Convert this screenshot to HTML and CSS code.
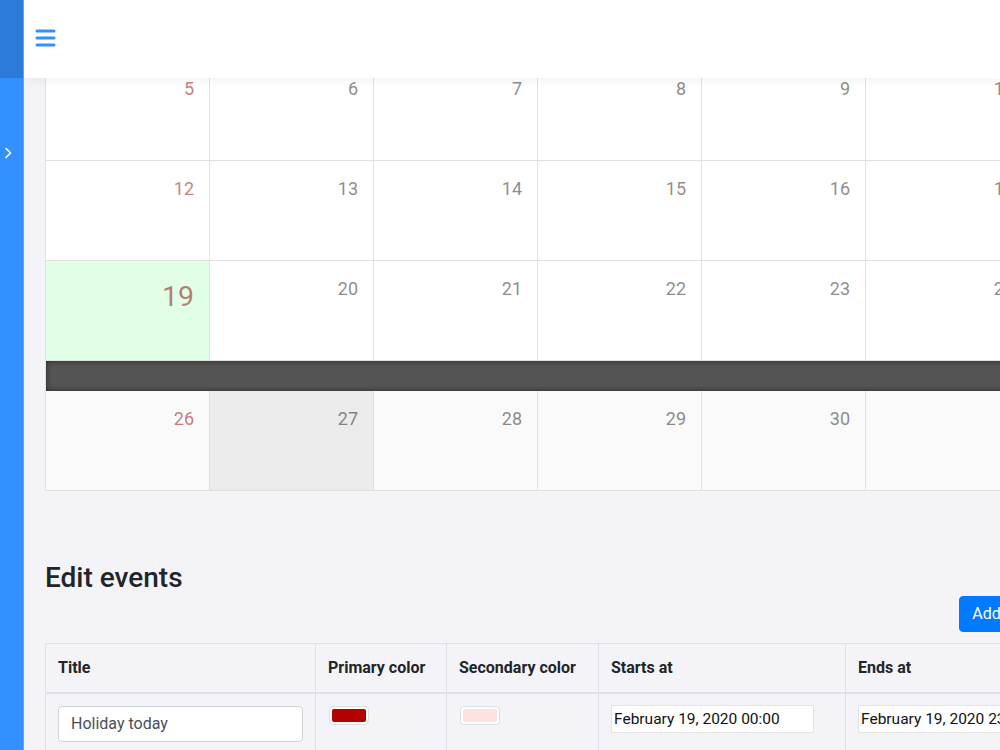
FILE: index.html
```html
<!DOCTYPE html>
<html lang="en">
<head>
<meta charset="utf-8">
<title>Calendar</title>
<link rel="stylesheet" href="styles.css">
</head>
<body>
<div class="app">
  <aside class="sidebar">
    <div class="sidebar-top"></div>
    <div class="sidebar-toggle">
      <svg width="8" height="12" viewBox="0 0 8 12"><path d="M2 1.5 L6.5 6 L2 10.5" fill="none" stroke="#fff" stroke-width="1.6" stroke-linecap="round" stroke-linejoin="round"/></svg>
    </div>
  </aside>
  <div class="main">
    <header class="topbar">
      <svg class="burger" width="21" height="18" viewBox="0 0 21 18"><g stroke="#3390ff" stroke-width="3" stroke-linecap="round"><line x1="2" y1="2" x2="19" y2="2"/><line x1="2" y1="9" x2="19" y2="9"/><line x1="2" y1="16" x2="19" y2="16"/></g></svg>
    </header>
    <div class="content">
      <div class="calendar">
        <div class="cal-row">
          <div class="cal-cell weekend"><span class="num">5</span></div>
          <div class="cal-cell"><span class="num">6</span></div>
          <div class="cal-cell"><span class="num">7</span></div>
          <div class="cal-cell"><span class="num">8</span></div>
          <div class="cal-cell"><span class="num">9</span></div>
          <div class="cal-cell"><span class="num">10</span></div>
          <div class="cal-cell weekend"><span class="num">11</span></div>
        </div>
        <div class="cal-row">
          <div class="cal-cell weekend"><span class="num">12</span></div>
          <div class="cal-cell"><span class="num">13</span></div>
          <div class="cal-cell"><span class="num">14</span></div>
          <div class="cal-cell"><span class="num">15</span></div>
          <div class="cal-cell"><span class="num">16</span></div>
          <div class="cal-cell"><span class="num">17</span></div>
          <div class="cal-cell weekend"><span class="num">18</span></div>
        </div>
        <div class="cal-row">
          <div class="cal-cell weekend today"><span class="num">19</span></div>
          <div class="cal-cell"><span class="num">20</span></div>
          <div class="cal-cell"><span class="num">21</span></div>
          <div class="cal-cell"><span class="num">22</span></div>
          <div class="cal-cell"><span class="num">23</span></div>
          <div class="cal-cell"><span class="num">24</span></div>
          <div class="cal-cell weekend"><span class="num">25</span></div>
        </div>
        <div class="open-day"></div>
        <div class="cal-row last">
          <div class="cal-cell weekend"><span class="num">26</span></div>
          <div class="cal-cell hovered"><span class="num">27</span></div>
          <div class="cal-cell"><span class="num">28</span></div>
          <div class="cal-cell"><span class="num">29</span></div>
          <div class="cal-cell"><span class="num">30</span></div>
          <div class="cal-cell"></div>
          <div class="cal-cell weekend"></div>
        </div>
      </div>

      <section class="edit">
        <h3 class="edit-title">Edit events</h3>
        <div class="toolbar">
          <button class="btn-primary">Add new</button>
        </div>
        <table class="events">
          <colgroup>
            <col class="c-title"><col class="c-primary"><col class="c-secondary"><col class="c-date"><col class="c-date"><col class="c-remove">
          </colgroup>
          <thead>
            <tr>
              <th>Title</th>
              <th>Primary color</th>
              <th>Secondary color</th>
              <th>Starts at</th>
              <th>Ends at</th>
              <th>Remove</th>
            </tr>
          </thead>
          <tbody>
            <tr>
              <td><input class="form-control" type="text" value="Holiday today"></td>
              <td><span class="swatch"><span class="swatch-fill primary"></span></span></td>
              <td><span class="swatch"><span class="swatch-fill secondary"></span></span></td>
              <td><input class="date-input" type="text" value="February 19, 2020 00:00"></td>
              <td><input class="date-input" type="text" value="February 19, 2020 23:59"></td>
              <td></td>
            </tr>
          </tbody>
        </table>
      </section>
    </div>
  </div>
</div>
</body>
</html>
```

FILE: styles.css
```css
* { box-sizing: border-box; }

html, body {
  margin: 0;
  height: 100%;
  overflow: hidden;
}

body {
  background: #f4f4f8;
  font-family: Roboto, "Liberation Sans", Arial, sans-serif;
  color: #212529;
}

.app {
  display: flex;
  height: 750px;
}

.sidebar {
  width: 24px;
  flex: none;
  background: #3390ff;
  border-right: 1px solid #5aa6ff;
  display: flex;
  flex-direction: column;
  position: relative;
  z-index: 3;
}

.sidebar-top {
  height: 78px;
  background: #2d7bd8;
}

.sidebar-toggle {
  margin-top: 68px;
  padding-left: 4px;
  height: 14px;
  display: flex;
  align-items: center;
}

.main {
  flex: 1;
  min-width: 0;
  display: flex;
  flex-direction: column;
  overflow: hidden;
}

.topbar {
  height: 78px;
  flex: none;
  background: #fff;
  display: flex;
  align-items: center;
  padding-left: 11px;
  position: relative;
  z-index: 2;
  box-shadow: 0 3px 10px rgba(0, 0, 0, 0.05);
}

.burger { display: block; margin-top: -2px; }

.content {
  padding-left: 21px;
}

.calendar {
  width: 1149px;
  margin-top: -18px;
  border-top: 1px solid #e1e1e1;
  border-left: 1px solid #e1e1e1;
  background: #fff;
}

.cal-row {
  display: grid;
  grid-template-columns: repeat(7, 164px);
  height: 100px;
  border-bottom: 1px solid #e1e1e1;
}

.cal-cell {
  border-right: 1px solid #e1e1e1;
  display: flex;
  justify-content: flex-end;
  align-items: flex-start;
}

.num {
  margin: 14px 15px 0 0;
  font-size: 18px;
  line-height: 27px;
  color: #000;
  opacity: 0.45;
}

.weekend .num {
  color: #8b0000;
  opacity: 0.5;
}

.today { background: #e1ffe6; }

.today .num {
  font-size: 28.5px;
  line-height: 42px;
  margin-top: 15px;
}

.last .cal-cell { background: #fafafa; }
.last .cal-cell.hovered { background: #ebebeb; }

.open-day {
  height: 30px;
  background: #555;
  box-shadow: inset 0 0 6px 0 rgba(0, 0, 0, 0.55);
}

.edit {
  width: 1002px;
  padding-top: 70px;
}

.edit-title {
  margin: 0;
  font-size: 28px;
  font-weight: 500;
  line-height: 1.2;
  color: #212529;
}

.toolbar {
  display: flex;
  justify-content: flex-end;
  margin-top: 1px;
}

.btn-primary {
  font-family: inherit;
  font-size: 16px;
  line-height: 24px;
  padding: 5px 12px;
  color: #fff;
  background: #007bff;
  border: 1px solid #007bff;
  border-radius: 4px;
}

.events {
  margin-top: 11px;
  border-collapse: collapse;
  table-layout: fixed;
  width: 1201px;
}

.c-title { width: 270px; }
.c-primary { width: 131px; }
.c-secondary { width: 152px; }
.c-date { width: 247px; }
.c-remove { width: 154px; }

.events th,
.events td {
  border: 1px solid #dee2e6;
  padding: 12px;
  text-align: left;
  vertical-align: top;
  font-size: 16px;
  line-height: 24px;
}

.events th {
  font-weight: 700;
  border-bottom-width: 2px;
  color: #212529;
}

.form-control {
  display: block;
  width: 100%;
  height: 36px;
  padding: 5px 12px;
  font-family: inherit;
  font-size: 16px;
  color: #495057;
  background: #fff;
  border: 1px solid #ced4da;
  border-radius: 4px;
}

.swatch {
  display: block;
  width: 40px;
  height: 19px;
  margin: 0 0 0 1px;
  padding: 2px;
  background: #fff;
  border: 1px solid #dedede;
  border-radius: 4px;
}

.swatch-fill {
  display: block;
  height: 100%;
  border-radius: 2px;
}

.swatch-fill.primary { background: #b50000; }
.swatch-fill.secondary { background: #fde2e2; }

.date-input {
  display: block;
  width: 203px;
  height: 28px;
  margin-top: -1px;
  padding: 0 2px;
  font-family: inherit;
  font-size: 15.5px;
  color: #111;
  background: #fff;
  border: 1px solid #e3e3e3;
  border-radius: 0;
}
```
